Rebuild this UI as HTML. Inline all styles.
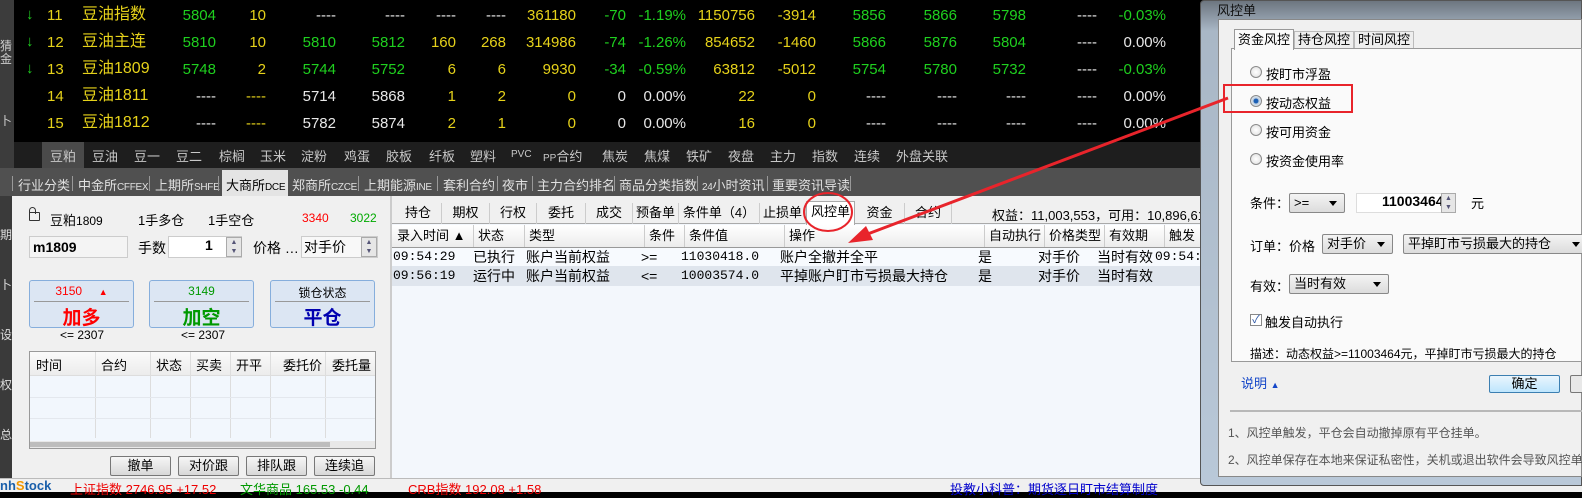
<!DOCTYPE html>
<html><head><meta charset="utf-8">
<style>
*{margin:0;padding:0;box-sizing:border-box}
body{width:1582px;height:492px;overflow:hidden;position:relative;background:#000;font-family:"Liberation Sans","Noto Sans CJK SC",sans-serif;font-size:13px}
.a{position:absolute;white-space:nowrap}
.q{font-size:15px;line-height:18px}
.y{color:#e6d21a}.g{color:#1fd01f}.w{color:#e8e8e8}
.r{text-align:right}
.tb{color:#c8c8c8;font-size:13px;top:146px}
.ex{color:#e0e0e0;top:175px;font-size:13px}
.ex i{font-style:normal;font-size:10px;letter-spacing:-0.3px}
.sep{position:absolute;top:176px;width:1px;height:15px;background:#999}
.btn3{position:absolute;top:280px;width:105px;height:48px;background:#dce6f3;border:1px solid #86aedc;border-radius:3px}
.btn3 .t{position:absolute;top:3px;width:100%;text-align:center;font-size:12px}
.btn3 .l{position:absolute;top:20px;left:4px;right:4px;height:1px;background:#999}
.btn3 .b{position:absolute;top:22px;width:100%;text-align:center;font-size:19px;font-weight:bold}
.sb{position:absolute;top:456px;width:61px;height:20px;border:1px solid #777;border-radius:2px;background:linear-gradient(#f6f6f6,#d8d8d8);text-align:center;font-size:13px;line-height:18px;color:#000}
.mt{position:absolute;top:203px;height:21px;font-size:13px;line-height:20px;text-align:center;border-right:1px solid #ccc;color:#000}
.th{position:absolute;top:225px;height:22px;font-size:13px;line-height:22px;padding-left:4px;border-right:1px solid #ccc;color:#000}
.td{position:absolute;font-size:14px;line-height:18px;color:#000}
.rad{position:absolute;width:12px;height:12px;border-radius:50%;border:1px solid #8a8a8a;background:radial-gradient(#fff,#ddd)}
.sel{position:absolute;height:20px;border:1px solid #888;border-radius:2px;background:linear-gradient(#f4f4f4,#dcdcdc);font-size:13px;line-height:18px;padding-left:4px;color:#000}
.sel:after{content:"";position:absolute;right:7px;top:7px;border:4px solid transparent;border-top:5px solid #000}
</style></head><body>

<div class="a" style="left:0;top:0;width:14px;height:142px;background:#3c3c3c"></div>
<div class="a w" style="left:0;top:40px;font-size:12px;color:#ccc;line-height:13px">猜<br>金</div>
<div class="a w" style="left:0;top:112px;font-size:12px;color:#ccc">卜</div>

<div class="a g q" style="left:26px;top:6px">↓</div><div class="a g q" style="left:26px;top:33px">↓</div><div class="a g q" style="left:26px;top:60px">↓</div>
<div class="q">
<div class="a y" style="left:47px;top:7px;font-size:15px">11</div><div class="a y" style="left:82px;top:6px;font-size:16px">豆油指数</div>
<div class="a g r" style="right:1366px;top:7px">5804</div><div class="a y r" style="right:1316px;top:7px">10</div>
<div class="a w r" style="right:1246px;top:7px">----</div><div class="a w r" style="right:1177px;top:7px">----</div><div class="a w r" style="right:1126px;top:7px">----</div><div class="a w r" style="right:1076px;top:7px">----</div>
<div class="a y r" style="right:1006px;top:7px">361180</div><div class="a g r" style="right:956px;top:7px">-70</div><div class="a g r" style="right:896px;top:7px">-1.19%</div>
<div class="a y r" style="right:827px;top:7px">1150756</div><div class="a y r" style="right:766px;top:7px">-3914</div>
<div class="a g r" style="right:696px;top:7px">5856</div><div class="a g r" style="right:625px;top:7px">5866</div><div class="a g r" style="right:556px;top:7px">5798</div>
<div class="a w r" style="right:485px;top:7px">----</div><div class="a g r" style="right:416px;top:7px">-0.03%</div>
<div class="a y" style="left:47px;top:34px;font-size:15px">12</div><div class="a y" style="left:82px;top:33px;font-size:16px">豆油主连</div>
<div class="a g r" style="right:1366px;top:34px">5810</div><div class="a y r" style="right:1316px;top:34px">10</div>
<div class="a g r" style="right:1246px;top:34px">5810</div><div class="a g r" style="right:1177px;top:34px">5812</div><div class="a y r" style="right:1126px;top:34px">160</div><div class="a y r" style="right:1076px;top:34px">268</div>
<div class="a y r" style="right:1006px;top:34px">314986</div><div class="a g r" style="right:956px;top:34px">-74</div><div class="a g r" style="right:896px;top:34px">-1.26%</div>
<div class="a y r" style="right:827px;top:34px">854652</div><div class="a y r" style="right:766px;top:34px">-1460</div>
<div class="a g r" style="right:696px;top:34px">5866</div><div class="a g r" style="right:625px;top:34px">5876</div><div class="a g r" style="right:556px;top:34px">5804</div>
<div class="a w r" style="right:485px;top:34px">----</div><div class="a w r" style="right:416px;top:34px">0.00%</div>
<div class="a y" style="left:47px;top:61px;font-size:15px">13</div><div class="a y" style="left:82px;top:60px;font-size:16px">豆油1809</div>
<div class="a g r" style="right:1366px;top:61px">5748</div><div class="a y r" style="right:1316px;top:61px">2</div>
<div class="a g r" style="right:1246px;top:61px">5744</div><div class="a g r" style="right:1177px;top:61px">5752</div><div class="a y r" style="right:1126px;top:61px">6</div><div class="a y r" style="right:1076px;top:61px">6</div>
<div class="a y r" style="right:1006px;top:61px">9930</div><div class="a g r" style="right:956px;top:61px">-34</div><div class="a g r" style="right:896px;top:61px">-0.59%</div>
<div class="a y r" style="right:827px;top:61px">63812</div><div class="a y r" style="right:766px;top:61px">-5012</div>
<div class="a g r" style="right:696px;top:61px">5754</div><div class="a g r" style="right:625px;top:61px">5780</div><div class="a g r" style="right:556px;top:61px">5732</div>
<div class="a w r" style="right:485px;top:61px">----</div><div class="a g r" style="right:416px;top:61px">-0.03%</div>
<div class="a y" style="left:47px;top:88px;font-size:15px">14</div><div class="a y" style="left:82px;top:87px;font-size:16px">豆油1811</div>
<div class="a w r" style="right:1366px;top:88px">----</div><div class="a y r" style="right:1316px;top:88px">----</div>
<div class="a w r" style="right:1246px;top:88px">5714</div><div class="a w r" style="right:1177px;top:88px">5868</div><div class="a y r" style="right:1126px;top:88px">1</div><div class="a y r" style="right:1076px;top:88px">2</div>
<div class="a y r" style="right:1006px;top:88px">0</div><div class="a w r" style="right:956px;top:88px">0</div><div class="a w r" style="right:896px;top:88px">0.00%</div>
<div class="a y r" style="right:827px;top:88px">22</div><div class="a y r" style="right:766px;top:88px">0</div>
<div class="a w r" style="right:696px;top:88px">----</div><div class="a w r" style="right:625px;top:88px">----</div><div class="a w r" style="right:556px;top:88px">----</div>
<div class="a w r" style="right:485px;top:88px">----</div><div class="a w r" style="right:416px;top:88px">0.00%</div>
<div class="a y" style="left:47px;top:115px;font-size:15px">15</div><div class="a y" style="left:82px;top:114px;font-size:16px">豆油1812</div>
<div class="a w r" style="right:1366px;top:115px">----</div><div class="a y r" style="right:1316px;top:115px">----</div>
<div class="a w r" style="right:1246px;top:115px">5782</div><div class="a w r" style="right:1177px;top:115px">5874</div><div class="a y r" style="right:1126px;top:115px">2</div><div class="a y r" style="right:1076px;top:115px">1</div>
<div class="a y r" style="right:1006px;top:115px">0</div><div class="a w r" style="right:956px;top:115px">0</div><div class="a w r" style="right:896px;top:115px">0.00%</div>
<div class="a y r" style="right:827px;top:115px">16</div><div class="a y r" style="right:766px;top:115px">0</div>
<div class="a w r" style="right:696px;top:115px">----</div><div class="a w r" style="right:625px;top:115px">----</div><div class="a w r" style="right:556px;top:115px">----</div>
<div class="a w r" style="right:485px;top:115px">----</div><div class="a w r" style="right:416px;top:115px">0.00%</div>
</div>

<div class="a" style="left:14px;top:142px;width:1190px;height:26px;background:#1e1e1e"></div>
<div class="a" style="left:0;top:142px;width:14px;height:26px;background:#3c3c3c"></div>
<div class="a" style="left:42px;top:142px;width:42px;height:26px;background:#4a4a4a"></div>
<div class="a tb" style="left:50px">豆粕</div><div class="a tb" style="left:92px">豆油</div><div class="a tb" style="left:134px">豆一</div><div class="a tb" style="left:176px">豆二</div><div class="a tb" style="left:219px">棕榈</div><div class="a tb" style="left:260px">玉米</div><div class="a tb" style="left:301px">淀粉</div><div class="a tb" style="left:344px">鸡蛋</div><div class="a tb" style="left:386px">胶板</div><div class="a tb" style="left:429px">纤板</div><div class="a tb" style="left:470px">塑料</div><div class="a tb" style="left:511px;font-size:10px;top:149px">PVC</div><div class="a tb" style="left:543px"><span style="font-size:10px">PP</span>合约</div><div class="a tb" style="left:602px">焦炭</div><div class="a tb" style="left:644px">焦煤</div><div class="a tb" style="left:686px">铁矿</div><div class="a tb" style="left:728px">夜盘</div><div class="a tb" style="left:770px">主力</div><div class="a tb" style="left:812px">指数</div><div class="a tb" style="left:854px">连续</div><div class="a tb" style="left:896px">外盘关联</div>

<div class="a" style="left:0;top:168px;width:1204px;height:28px;background:#505050"></div>
<div class="a" style="left:222px;top:170px;width:66px;height:26px;background:#e4e4e4"></div>
<div class="sep" style="left:12px"></div>
<div class="a ex" style="left:18px">行业分类</div><div class="sep" style="left:72px"></div>
<div class="a ex" style="left:78px">中金所<i>CFFEX</i></div><div class="sep" style="left:149px"></div>
<div class="a ex" style="left:155px">上期所<i>SHFE</i></div><div class="sep" style="left:218px"></div>
<div class="a ex" style="left:226px;color:#000">大商所<i>DCE</i></div>
<div class="a ex" style="left:292px">郑商所<i>CZCE</i></div><div class="sep" style="left:358px"></div>
<div class="a ex" style="left:364px">上期能源<i>INE</i></div><div class="sep" style="left:437px"></div>
<div class="a ex" style="left:443px">套利合约</div><div class="sep" style="left:497px"></div>
<div class="a ex" style="left:502px">夜市</div><div class="sep" style="left:532px"></div>
<div class="a ex" style="left:537px">主力合约排名</div><div class="sep" style="left:614px"></div>
<div class="a ex" style="left:619px">商品分类指数</div><div class="sep" style="left:697px"></div>
<div class="a ex" style="left:702px"><i>24</i>小时资讯</div><div class="sep" style="left:767px"></div>
<div class="a ex" style="left:772px">重要资讯导读</div><div class="sep" style="left:850px"></div>

<div class="a" style="left:0;top:196px;width:12px;height:282px;background:#3a3a3a"></div>
<div class="a" style="left:0;top:210px;color:#ddd;font-size:12px;line-height:50px">期<br>卜<br>设<br>权<br>总</div>
<div class="a" style="left:12px;top:196px;width:378px;height:282px;background:#f0f0f0"></div>
<div class="a" style="left:29px;top:212px;width:11px;height:9px;border:1.5px solid #333;border-radius:1px"></div>
<div class="a" style="left:29px;top:207px;width:7px;height:7px;border:1.5px solid #333;border-bottom:none;border-radius:4px 4px 0 0"></div>
<div class="a" style="left:50px;top:210px;color:#000">豆粕<span style="font-size:12px">1809</span></div>
<div class="a" style="left:138px;top:210px;color:#000">1手多仓</div>
<div class="a" style="left:208px;top:210px;color:#000">1手空仓</div>
<div class="a" style="left:302px;top:211px;color:#f00;font-size:12px">3340</div>
<div class="a" style="left:350px;top:211px;color:#0a0;font-size:12px">3022</div>
<div class="a" style="left:29px;top:236px;width:99px;height:22px;border:1px solid #ccc;background:#f4f4f4;font-weight:bold;font-size:14px;line-height:20px;padding-left:3px;color:#000">m1809</div>
<div class="a" style="left:138px;top:238px;color:#000;font-size:14px">手数</div>
<div class="a" style="left:168px;top:236px;width:74px;height:22px;border:1px solid #ccc;background:#fff"></div>
<div class="a" style="left:205px;top:237px;font-weight:bold;font-size:14px;color:#000">1</div>
<div class="a" style="left:226px;top:237px;width:16px;height:20px;background:#e6e6e6;border:1px solid #aaa;font-size:7px;text-align:center;line-height:9px;color:#557">▲<br>▼</div>
<div class="a" style="left:253px;top:238px;color:#000;font-size:14px">价格 …</div>
<div class="a" style="left:301px;top:236px;width:77px;height:22px;border:1px solid #ccc;background:#f8f8f8;font-size:14px;line-height:20px;padding-left:2px;color:#000">对手价</div>
<div class="a" style="left:361px;top:237px;width:16px;height:20px;background:#e6e6e6;border:1px solid #aaa;font-size:7px;text-align:center;line-height:9px;color:#557">▲<br>▼</div>

<div class="btn3" style="left:29px"><div class="t" style="color:#f00">3150 &nbsp; &nbsp; <span style="font-size:9px">▲</span></div><div class="l"></div><div class="b" style="color:#f00">加多</div></div>
<div class="btn3" style="left:149px"><div class="t" style="color:#090">3149</div><div class="l"></div><div class="b" style="color:#090">加空</div></div>
<div class="btn3" style="left:270px"><div class="t" style="color:#000">锁仓状态</div><div class="l"></div><div class="b" style="color:#0000b0">平仓</div></div>
<div class="a" style="left:60px;top:328px;color:#000;font-size:12px">&lt;= 2307</div>
<div class="a" style="left:181px;top:328px;color:#000;font-size:12px">&lt;= 2307</div>

<div class="a" style="left:29px;top:351px;width:347px;height:98px;border:1px solid #999;background:#f2f7fd"></div>
<div class="a" style="left:30px;top:352px;width:345px;height:24px;background:linear-gradient(#fafafa,#ececec);border-bottom:1px solid #ddd"></div>
<div class="a" style="left:36px;top:355px;color:#000">时间</div><div class="a" style="left:101px;top:355px;color:#000">合约</div><div class="a" style="left:156px;top:355px;color:#000">状态</div><div class="a" style="left:196px;top:355px;color:#000">买卖</div><div class="a" style="left:236px;top:355px;color:#000">开平</div><div class="a" style="left:283px;top:355px;color:#000">委托价</div><div class="a" style="left:332px;top:355px;color:#000">委托量</div>
<div class="a" style="left:95px;top:352px;width:1px;height:86px;background:#ddd"></div><div class="a" style="left:150px;top:352px;width:1px;height:86px;background:#ddd"></div><div class="a" style="left:190px;top:352px;width:1px;height:86px;background:#ddd"></div><div class="a" style="left:230px;top:352px;width:1px;height:86px;background:#ddd"></div><div class="a" style="left:270px;top:352px;width:1px;height:86px;background:#ddd"></div><div class="a" style="left:325px;top:352px;width:1px;height:86px;background:#ddd"></div>
<div class="a" style="left:30px;top:397px;width:345px;height:1px;background:#e4e8ee"></div><div class="a" style="left:30px;top:418px;width:345px;height:1px;background:#e4e8ee"></div>
<div class="a" style="left:30px;top:441px;width:345px;height:7px;background:#e8e8e8"></div>
<div class="a" style="left:30px;top:442px;width:300px;height:5px;background:#bdbdbd"></div>
<div class="sb" style="left:110px">撤单</div><div class="sb" style="left:178px">对价跟</div><div class="sb" style="left:246px">排队跟</div><div class="sb" style="left:314px">连续追</div>

<div class="a" style="left:390px;top:196px;width:814px;height:282px;background:#f3f7fc"></div>
<div class="a" style="left:390px;top:196px;width:814px;height:28px;background:#f0f0f0;border-bottom:1px solid #aaa"></div>
<div class="a" style="left:390px;top:196px;width:2px;height:282px;background:#ccc"></div>
<div class="mt" style="left:395px;width:47px">持仓</div><div class="mt" style="left:442px;width:48px">期权</div><div class="mt" style="left:490px;width:47px">行权</div><div class="mt" style="left:537px;width:49px">委托</div><div class="mt" style="left:586px;width:47px">成交</div><div class="mt" style="left:633px;width:46px">预备单</div><div class="mt" style="left:679px;width:81px">条件单（4）</div><div class="mt" style="left:760px;width:46px">止损单</div>
<div class="mt" style="left:806px;width:49px;background:#fff;top:201px;height:24px;border:1px solid #aaa;border-bottom:none">风控单</div>
<div class="mt" style="left:855px;width:50px">资金</div><div class="mt" style="left:905px;width:47px">合约</div>
<div class="a" style="left:992px;top:205px;color:#000;font-size:13px">权益：11,003,553，可用：10,896,614</div>
<div class="a" style="left:392px;top:225px;width:812px;height:23px;background:linear-gradient(#fff,#ececec);border-bottom:1px solid #999"></div>
<div class="th" style="left:393px;width:81px">录入时间 ▲</div><div class="th" style="left:474px;width:51px">状态</div><div class="th" style="left:525px;width:120px">类型</div><div class="th" style="left:645px;width:40px">条件</div><div class="th" style="left:685px;width:100px">条件值</div><div class="th" style="left:785px;width:200px">操作</div><div class="th" style="left:985px;width:60px">自动执行</div><div class="th" style="left:1045px;width:60px">价格类型</div><div class="th" style="left:1105px;width:60px">有效期</div><div class="th" style="left:1165px;width:40px">触发时间</div>
<div class="a" style="left:392px;top:248px;width:812px;height:18px;background:#f7fafe"></div>
<div class="a" style="left:392px;top:266px;width:812px;height:20px;background:#dfe5ed"></div>
<div class="td" style="left:393px;top:248px;font-family:'Liberation Mono',monospace;font-size:13px">09:54:29</div><div class="td" style="left:473px;top:248px">已执行</div><div class="td" style="left:526px;top:248px">账户当前权益</div><div class="td" style="left:641px;top:248px">&gt;=</div><div class="td" style="left:681px;top:248px;font-family:'Liberation Mono',monospace;font-size:13px">11030418.0</div><div class="td" style="left:780px;top:248px">账户全撤并全平</div><div class="td" style="left:978px;top:248px">是</div><div class="td" style="left:1038px;top:248px">对手价</div><div class="td" style="left:1097px;top:248px">当时有效</div><div class="td" style="left:1155px;top:248px;font-family:'Liberation Mono',monospace;font-size:13px">09:54:</div>
<div class="td" style="left:393px;top:267px;font-family:'Liberation Mono',monospace;font-size:13px">09:56:19</div><div class="td" style="left:473px;top:267px">运行中</div><div class="td" style="left:526px;top:267px">账户当前权益</div><div class="td" style="left:641px;top:267px">&lt;=</div><div class="td" style="left:681px;top:267px;font-family:'Liberation Mono',monospace;font-size:13px">10003574.0</div><div class="td" style="left:780px;top:267px">平掉账户盯市亏损最大持仓</div><div class="td" style="left:978px;top:267px">是</div><div class="td" style="left:1038px;top:267px">对手价</div><div class="td" style="left:1097px;top:267px">当时有效</div>

<div class="a" style="left:0;top:478px;width:1582px;height:14px;background:#f0f0f0;border-top:1px solid #bbb"></div>
<div class="a" style="left:0;top:478px;font-size:13px;font-weight:bold;color:#1a5faa">nh<span style="color:#f39800">S</span>tock</div>
<div class="a" style="left:70px;top:479px;color:#e00;font-size:13px">上证指数 2746.95 +17.52</div>
<div class="a" style="left:240px;top:479px;color:#090;font-size:13px">文华商品 165.53 -0.44</div>
<div class="a" style="left:408px;top:479px;color:#e00;font-size:13px">CRB指数 192.08 +1.58</div>
<div class="a" style="left:950px;top:479px;color:#00c;font-size:13px">投教小科普：期货逐日盯市结算制度</div>

<div class="a" style="left:1200px;top:0;width:382px;height:486px;background:linear-gradient(#6d7680,#a9b7c6 30px,#b9c8d8);border:1px solid #555;border-radius:4px 0 0 4px"></div>
<div class="a" style="left:1217px;top:0;color:#111;font-size:13px">风控单</div>
<div class="a" style="left:1218px;top:19px;width:364px;height:458px;background:#f0f0f0;border:1px solid #888"></div>
<div class="a" style="left:1231px;top:48px;width:351px;height:314px;background:#fafafa;border:1px solid #999"></div>
<div class="a" style="left:1234px;top:29px;width:60px;height:21px;background:#fafafa;border:1px solid #999;border-bottom:none;color:#000;text-align:center;line-height:19px">资金风控</div>
<div class="a" style="left:1294px;top:31px;width:60px;height:17px;border:1px solid #bbb;border-bottom:none;color:#000;text-align:center;line-height:16px;background:#eee">持仓风控</div>
<div class="a" style="left:1354px;top:31px;width:60px;height:17px;border:1px solid #bbb;border-bottom:none;color:#000;text-align:center;line-height:16px;background:#eee">时间风控</div>
<div class="rad" style="left:1250px;top:66px"></div><div class="a" style="left:1266px;top:64px;color:#000">按盯市浮盈</div>
<div class="rad" style="left:1250px;top:95px;background:radial-gradient(#1b5fb5 30%,#bcd 40%,#fff)"></div><div class="a" style="left:1266px;top:93px;color:#000">按动态权益</div>
<div class="rad" style="left:1250px;top:124px"></div><div class="a" style="left:1266px;top:122px;color:#000">按可用资金</div>
<div class="rad" style="left:1250px;top:153px"></div><div class="a" style="left:1266px;top:151px;color:#000">按资金使用率</div>
<div class="a" style="left:1250px;top:193px;color:#000">条件：</div>
<div class="sel" style="left:1289px;top:193px;width:56px">&gt;=</div>
<div class="a" style="left:1356px;top:193px;width:100px;height:20px;background:#fff;border:1px solid #ddd"></div>
<div class="a" style="left:1382px;top:193px;font-weight:bold;font-size:14px;color:#000">11003464</div>
<div class="a" style="left:1441px;top:193px;width:15px;height:20px;background:#e6e6e6;border:1px solid #aaa;font-size:7px;text-align:center;line-height:9px;color:#557">▲<br>▼</div>
<div class="a" style="left:1471px;top:193px;color:#000">元</div>
<div class="a" style="left:1250px;top:236px;color:#000">订单：</div><div class="a" style="left:1289px;top:236px;color:#000">价格</div>
<div class="sel" style="left:1322px;top:234px;width:71px">对手价</div>
<div class="sel" style="left:1403px;top:234px;width:185px">平掉盯市亏损最大的持仓</div>
<div class="a" style="left:1250px;top:276px;color:#000">有效：</div>
<div class="sel" style="left:1289px;top:274px;width:100px">当时有效</div>
<div class="a" style="left:1250px;top:314px;width:12px;height:12px;border:1px solid #888;background:#fff;font-size:11px;line-height:10px;color:#2a55a5;text-align:center">✓</div>
<div class="a" style="left:1265px;top:312px;color:#000">触发自动执行</div>
<div class="a" style="left:1250px;top:345px;color:#000;font-size:12px">描述：动态权益&gt;=11003464元，平掉盯市亏损最大的持仓</div>
<div class="a" style="left:1241px;top:373px;color:#1446c8">说明 <span style="font-size:9px">▲</span></div>
<div class="a" style="left:1489px;top:375px;width:71px;height:18px;border:1px solid #3c7fb1;border-radius:2px;background:linear-gradient(#eaf6fd,#bee6fd);text-align:center;line-height:16px;color:#000">确定</div>
<div class="a" style="left:1570px;top:375px;width:20px;height:18px;border:1px solid #777;border-radius:2px;background:#e8e8e8"></div>
<div class="a" style="left:1230px;top:410px;width:352px;height:2px;background:#b8b8b8"></div>
<div class="a" style="left:1228px;top:424px;color:#555;font-size:12px">1、风控单触发，平仓会自动撤掉原有平仓挂单。</div>
<div class="a" style="left:1228px;top:451px;color:#555;font-size:12px">2、风控单保存在本地来保证私密性，关机或退出软件会导致风控单</div>

<div class="a" style="left:1223px;top:84px;width:130px;height:29px;border:2px solid #e8242b"></div>
<svg class="a" style="left:0;top:0" width="1582" height="492">
<ellipse cx="828" cy="212" rx="24" ry="19" fill="none" stroke="#e8242b" stroke-width="2"/>
<line x1="1228" y1="98" x2="865" y2="235" stroke="#e8242b" stroke-width="3"/>
<polygon points="848,243 866,226 873,240" fill="#e8242b"/>
</svg>
</body></html>
